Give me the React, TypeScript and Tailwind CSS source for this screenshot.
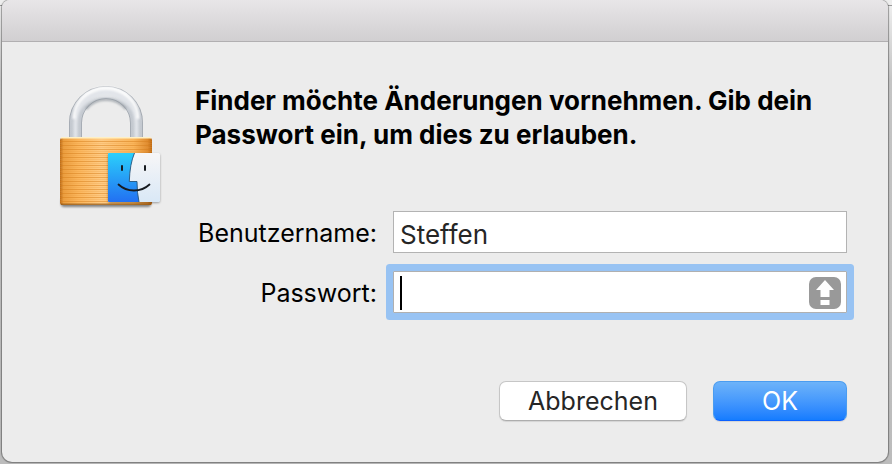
import type { ReactNode } from "react";

function LockIcon() {
  return (
    <svg viewBox="0 -1 106 128" className="w-[106px] h-[128px] shrink-0" role="img" aria-label="Finder">
      <defs>
        <linearGradient id="brass" x1="0" x2="1" y1="0" y2="0">
          <stop offset="0" stopColor="#b96a18" />
          <stop offset="0.04" stopColor="#ec9f40" />
          <stop offset="0.2" stopColor="#fbb65c" />
          <stop offset="0.45" stopColor="#ffcb84" />
          <stop offset="0.8" stopColor="#fab55a" />
          <stop offset="0.95" stopColor="#e08c30" />
          <stop offset="1" stopColor="#bd6912" />
        </linearGradient>
        <pattern id="grooves" width="10" height="4" patternUnits="userSpaceOnUse">
          <rect y="0" width="10" height="1" fill="#d67e1c" opacity="0.5" />
          <rect y="2" width="10" height="1" fill="#e8973a" opacity="0.25" />
        </pattern>
        <linearGradient id="steel" x1="0" x2="0" y1="0" y2="1">
          <stop offset="0" stopColor="#e9ebee" />
          <stop offset="0.4" stopColor="#c5cad1" />
          <stop offset="1" stopColor="#c3c8cf" />
        </linearGradient>
        <linearGradient id="face" x1="0" x2="0" y1="0" y2="1">
          <stop offset="0" stopColor="#2bd0fb" />
          <stop offset="1" stopColor="#2270f2" />
        </linearGradient>
        <linearGradient id="profile" x1="0" x2="0" y1="0" y2="1">
          <stop offset="0" stopColor="#f7f6f7" />
          <stop offset="1" stopColor="#d9e8f6" />
        </linearGradient>
        <filter id="soft" x="-20%" y="-20%" width="140%" height="140%">
          <feGaussianBlur stdDeviation="1" />
        </filter>
      </defs>
      <path d="M17.500 53V38a30.500 30.500 0 0 1 61 0V53" fill="none" stroke="#a0a6ae" strokeWidth="13" />
      <path d="M17.500 53V38a30.500 30.500 0 0 1 61 0V53" fill="none" stroke="url(#steel)" strokeWidth="11.400" />
      <path d="M17.500 53V38a30.500 30.500 0 0 1 61 0V53" fill="none" stroke="#e2e5ea" strokeWidth="4" filter="url(#soft)" />
      <path d="M16 34a32 31 0 0 1 64 0" fill="none" stroke="#fff" strokeWidth="3" opacity="0.9" filter="url(#soft)" />
      <path d="M28 24a26 26 0 0 1 40 0" fill="none" stroke="#8f969e" strokeWidth="2.500" opacity="0.75" filter="url(#soft)" />
      <rect x="3" y="113" width="90" height="9" rx="3" fill="#000" opacity="0.45" filter="url(#soft)" />
      <rect x="2" y="53" width="92" height="67" rx="2" fill="url(#brass)" />
      <rect x="2" y="55" width="92" height="63" fill="url(#grooves)" />
      <rect x="3" y="52" width="90" height="1.500" fill="#fff0c4" />
      <rect x="3" y="118.500" width="90" height="1.500" fill="#8d5416" opacity="0.7" />
      <rect x="50" y="69" width="52" height="49" rx="2" fill="#000" opacity="0.35" filter="url(#soft)" />
      <rect x="50" y="68" width="52" height="49" rx="1.500" fill="url(#profile)" />
      <path d="M51 68H76.500Q71.800 79 71.300 96.500H79Q79 108 81 117H51a1 1 0 0 1-1-1V69a1 1 0 0 1 1-1z" fill="url(#face)" />
      <path d="M76.500 68Q71.800 79 71.300 96.500H79Q79 108 81 117" fill="none" stroke="#24537c" strokeWidth="0.900" />
      <path d="M64 80.300v5.500M87 80.300v5.500" stroke="#171b20" strokeWidth="2" />
      <path d="M60.500 99.500C69 107.500 83 107.500 91.500 99.500" fill="none" stroke="#171b20" strokeWidth="1.800" strokeLinecap="round" />
    </svg>
  );
}

function CapsLockIcon() {
  return (
    <svg viewBox="0 0 32 32" className="pointer-events-none absolute right-[6px] top-[6px] size-8" role="img" aria-label="Feststelltaste">
      <rect width="32" height="32" rx="7" fill="#999" />
      <path d="M16 3l9 10h-4.500v7h-9v-7H7z" fill="#fff" />
      <rect x="11.500" y="23" width="9" height="5" fill="#fff" />
    </svg>
  );
}

function Field({ id, label, children }: { id: string; label: string; children: ReactNode }) {
  return (
    <div className="flex items-center gap-4">
      <label htmlFor={id} className="w-[182px] shrink-0 whitespace-nowrap pt-0.5 text-right text-[25px] leading-[34px]">
        {label}
      </label>
      <div className="relative min-w-0 flex-1">{children}</div>
    </div>
  );
}

export default function App() {
  return (
    <div className="min-h-screen bg-[linear-gradient(#ededed_5px,#999_5px,#999_6px,#ededed_6px,#c4c4c4_80px,#bcbcbc)] pb-0.5 pl-0.5 pr-1 font-['Inter','Liberation_Sans',sans-serif] text-black">
      <main role="dialog" aria-labelledby="message" className="overflow-hidden rounded-b-[10px] rounded-t-lg bg-[#ececec] shadow-[0_0_1px_1px_#00000059]">
        <div className="h-[42px] border-b border-[#b1afb1] bg-linear-to-b from-[#e8e6e8] to-[#d1cfd1]" />
        <form className="flex gap-[31px] pb-[41px] pl-14 pr-[41px] pt-[42px]" onSubmit={(e) => e.preventDefault()}>
          <LockIcon />
          <div className="min-w-0 flex-1">
            <h1 id="message" className="text-[26px] font-bold leading-[34px]">
              Finder möchte Änderungen vornehmen. Gib dein Passwort ein, um dies zu erlauben.
            </h1>
            <div className="mt-[59px] flex flex-col gap-[18px]">
              <Field id="user" label="Benutzername:">
                <input id="user" type="text" defaultValue="Steffen" className="block h-[42px] w-full border border-[#b3b3b3] bg-white px-1.5 pt-1 text-[26px] text-[#262626] outline-none" />
              </Field>
              <Field id="password" label="Passwort:">
                <input id="password" type="password" className="block h-[42px] w-full rounded-[1px] border border-[#b0b0b0] bg-white pl-1.5 pr-11 text-[26px] caret-transparent shadow-[0_0_0_7px_#98c3f3] outline-none" />
                <span className="pointer-events-none absolute left-[7px] top-[5px] h-[34px] w-0.5 bg-black" />
                <CapsLockIcon />
              </Field>
            </div>
            <div className="mt-[68px] flex justify-end gap-[26px] text-[25px] leading-[34px]">
              <button type="button" className="h-10 w-[188px] rounded-[7px] border border-[#c6c6c6] border-b-[#adadad] bg-white text-[#262626] shadow-[0_1px_1px_#0000001a]">
                Abbrechen
              </button>
              <button type="submit" className="h-10 w-[134px] rounded-[7px] border border-[#4a9cf0] border-b-[#0a60ff] bg-linear-to-b from-[#6db3f9] to-[#147cff] text-white shadow-[0_1px_1px_#0000001a]">
                OK
              </button>
            </div>
          </div>
        </form>
      </main>
    </div>
  );
}
